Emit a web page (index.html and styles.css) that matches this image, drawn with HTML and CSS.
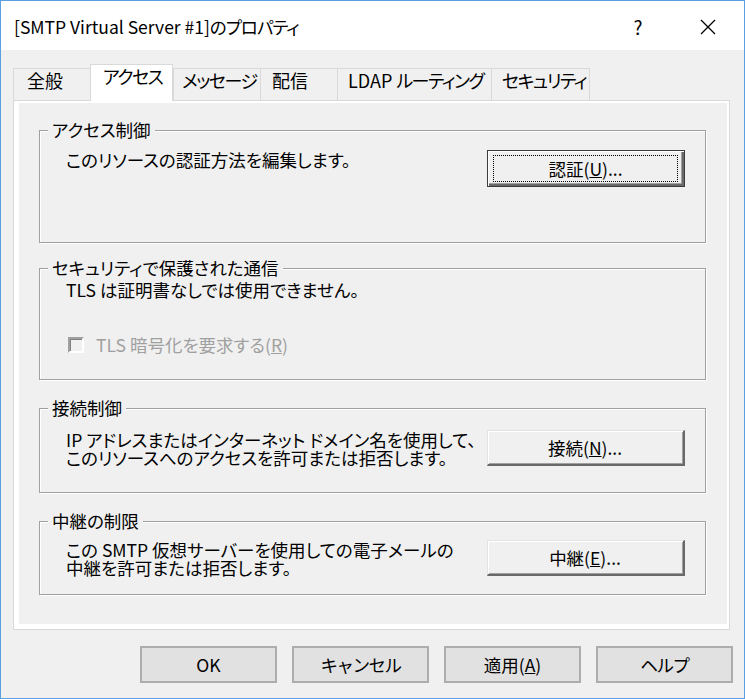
FILE: index.html
```html
<!DOCTYPE html>
<html lang="ja">
<head>
<meta charset="utf-8">
<title>[SMTP Virtual Server #1]のプロパティ</title>
<link rel="stylesheet" href="styles.css">
</head>
<body>
<div class="dialog">
  <div class="titlebar">
    <div class="title">[SMTP Virtual Server #1]<span class="kana">のプロパティ</span></div>
    <div class="help">?</div>
    <div class="close">
      <svg width="16" height="16" viewBox="0 0 16 16"><path d="M1 1L15 15M15 1L1 15" stroke="#000" stroke-width="1.3" fill="none"/></svg>
    </div>
  </div>

  <div class="tabs">
    <div class="tab w-general">全般</div>
    <div class="tab active w-access kana">アクセス</div>
    <div class="tab w-msg kana">メッセージ</div>
    <div class="tab w-deliv">配信</div>
    <div class="tab w-ldap">LDAP <span class="kana">ルーティング</span></div>
    <div class="tab last w-sec kana">セキュリティ</div>
  </div>

  <div class="panel">
    <div class="page">
      <div class="group g1">
        <div class="group-title">アクセス制御</div>
        <div class="row">
          <div class="text">このリソースの認証方法を編集します。</div>
          <button class="cbtn default"><span class="focus">認証(<u>U</u>)...</span></button>
        </div>
      </div>

      <div class="group g2">
        <div class="group-title">セキュリティで保護された通信</div>
        <div class="text tls-note">TLS は証明書なしでは使用できません。</div>
        <div class="check-row">
          <span class="checkbox"></span>
          <span class="check-label">TLS 暗号化を要求する(<u>R</u>)</span>
        </div>
      </div>

      <div class="group g3">
        <div class="group-title">接続制御</div>
        <div class="row">
          <div class="text">IP アドレスまたはインターネット ドメイン名を使用して、<br>このリソースへのアクセスを許可または拒否します。</div>
          <button class="cbtn"><span class="focus plain">接続(<u>N</u>)...</span></button>
        </div>
      </div>

      <div class="group g4">
        <div class="group-title">中継の制限</div>
        <div class="row">
          <div class="text">この SMTP 仮想サーバーを使用しての電子メールの<br>中継を許可または拒否します。</div>
          <button class="cbtn"><span class="focus plain">中継(<u>E</u>)...</span></button>
        </div>
      </div>
    </div>
  </div>

  <div class="footer">
    <button class="pbtn">OK</button>
    <button class="pbtn kana">キャンセル</button>
    <button class="pbtn">適用(<u>A</u>)</button>
    <button class="pbtn kana">ヘルプ</button>
  </div>
</div>
</body>
</html>
```

FILE: styles.css
```css
html, body {
  margin: 0;
  padding: 0;
  background: #ffffff;
}

.dialog {
  width: 745px;
  height: 699px;
  box-sizing: border-box;
  border: 1px solid #5b9fe3;
  background: #f0f0f0;
  font-family: "Noto Sans CJK JP", "Noto Sans", sans-serif;
  font-feature-settings: "palt";
  color: #000;
  display: flex;
  flex-direction: column;
}

.kana {
  letter-spacing: -1.5px;
}

/* title bar */
.titlebar {
  height: 49px;
  flex: none;
  box-sizing: border-box;
  background: #ffffff;
  display: flex;
  align-items: center;
  padding: 2px 28px 0 13px;
  font-size: 17.5px;
}

.title {
  flex: 1;
  white-space: nowrap;
}

.title .kana {
  letter-spacing: -1px;
}

.help {
  width: 20px;
  text-align: center;
  margin-right: 52px;
  font-size: 19px;
}

.close {
  width: 16px;
  height: 16px;
  display: flex;
}

/* tabs */
.tabs {
  flex: none;
  display: flex;
  align-items: flex-end;
  height: 36px;
  margin-top: 14px;
  padding-left: 12px;
  font-size: 18px;
}

.tab {
  box-sizing: border-box;
  height: 32px;
  border: 1px solid #d9d9d9;
  border-bottom: none;
  border-right: none;
  background: #f0f0f0;
  padding: 1px 0 0 11px;
  line-height: 20px;
  white-space: nowrap;
  overflow: hidden;
}

.tab.last {
  border-right: 1px solid #d9d9d9;
}

.tab.active {
  height: 37px;
  margin-bottom: -1px;
  background: #ffffff;
  border-right: 1px solid #d9d9d9;
  position: relative;
  z-index: 1;
}

.w-general { width: 77px; padding-left: 13px; }
.w-access { width: 83px; padding-left: 12px; }
.w-msg { width: 87px; padding-left: 8px; }
.w-deliv { width: 77px; }
.w-ldap { width: 154px; padding-left: 10px; }
.w-sec { width: 99px; padding-left: 10px; }

/* tab page */
.panel {
  flex: none;
  box-sizing: border-box;
  width: 717px;
  height: 530px;
  margin-left: 12px;
  border: 1px solid #d9d9d9;
  background: #ffffff;
  padding: 2px 2px 5px 5px;
}

.page {
  height: 100%;
  box-sizing: border-box;
  background: #f0f0f0;
  padding: 27px 0 0 20px;
}

/* group boxes */
.group {
  box-sizing: border-box;
  width: 667px;
  border: 1px solid #a0a0a0;
  box-shadow: inset 1px 1px 0 #ffffff, 1px 1px 0 #ffffff;
  padding: 0 20px 0 26px;
  font-size: 17.5px;
}

.group-title {
  width: fit-content;
  margin: -11px 0 0 -18px;
  padding: 0 4px;
  background: #f0f0f0;
  line-height: 20px;
  white-space: nowrap;
}

.g1 { height: 113px; }
.g2 { height: 112px; margin-top: 25px; }
.g3 { height: 85px; margin-top: 28px; }
.g4 { height: 74px; margin-top: 28px; }

.row {
  display: flex;
  justify-content: space-between;
  align-items: flex-start;
}

.g1 .row { margin-top: 10px; }
.g3 .row { margin-top: 12px; }
.g4 .row { margin-top: 9px; }

.text {
  line-height: 18px;
  white-space: nowrap;
  padding-top: 1px;
}

.tls-note {
  margin-top: 3px;
  padding-top: 0;
}

.check-row {
  margin-top: 37px;
  display: flex;
  align-items: center;
  line-height: 18px;
  color: #a0a0a0;
}

.checkbox {
  width: 16px;
  height: 16px;
  box-sizing: border-box;
  margin: 0 12px 0 2px;
  border: 2px solid;
  border-color: #a0a0a0 #ffffff #ffffff #a0a0a0;
  box-shadow: inset 1px 1px 0 #808080;
  background: #f0f0f0;
}

/* classic buttons */
.cbtn {
  width: 198px;
  height: 36px;
  box-sizing: border-box;
  margin: 0;
  padding: 4px 6px 4px 5px;
  display: flex;
  background: #f0f0f0;
  border: 1px solid;
  border-width: 1px 2px 2px 1px;
  border-color: #e3e3e3 #696969 #696969 #e3e3e3;
  box-shadow: inset 1px 1px 0 #ffffff, inset -1px -1px 0 #a0a0a0;
  font-family: inherit;
  font-size: 17.5px;
  color: #000;
}

.cbtn.default {
  height: 37px;
  border: 1px solid #3c3c3c;
  box-shadow: inset 1px 1px 0 #ffffff, inset -2px -2px 0 #696969, inset -3px -3px 0 #a0a0a0;
}

.focus {
  flex: 1;
  display: flex;
  align-items: center;
  justify-content: center;
  border: 1px dotted #000;
  line-height: 18px;
}

.focus.plain {
  border-color: transparent;
}

/* bottom buttons */
.footer {
  flex: none;
  display: flex;
  justify-content: flex-end;
  gap: 15px;
  padding: 16px 11px 0 0;
}

.pbtn {
  width: 137px;
  height: 37px;
  box-sizing: border-box;
  margin: 0;
  padding: 0;
  border: 2px solid #adadad;
  background: #e1e1e1;
  font-family: inherit;
  font-size: 17.5px;
  color: #000;
}
```
